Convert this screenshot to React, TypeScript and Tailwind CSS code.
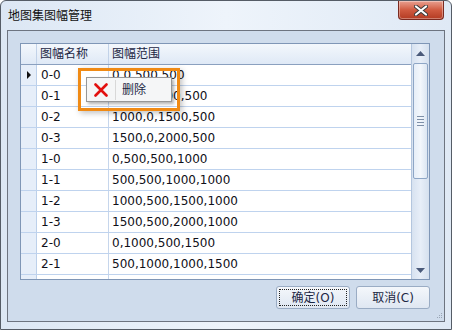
import React from "react";

const rows = [
  ["0-0", "0,0,500,500"],
  ["0-1", "500,0,1000,500"],
  ["0-2", "1000,0,1500,500"],
  ["0-3", "1500,0,2000,500"],
  ["1-0", "0,500,500,1000"],
  ["1-1", "500,500,1000,1000"],
  ["1-2", "1000,500,1500,1000"],
  ["1-3", "1500,500,2000,1000"],
  ["2-0", "0,1000,500,1500"],
  ["2-1", "500,1000,1000,1500"],
  ["2-2", "1000,1000,1500,1500"],
];

const font = { fontFamily: '"DejaVu Sans", "Noto Sans CJK SC", sans-serif' };

function CloseButton() {
  return (
    <div className="w-[46px] h-[19px] rounded-b-[4px] border border-t-0 border-[#7a2a20] bg-gradient-to-b from-[#e8a090] via-[#d05a40] to-[#b33a22] flex items-center justify-center shadow-[inset_0_0_0_1px_rgba(255,255,255,0.35)]">
      <svg width="14" height="11" viewBox="0 0 14 11">
        <path d="M2 1.5 L12 9.5 M12 1.5 L2 9.5" stroke="#3a3a3a" strokeWidth="4" strokeLinecap="round" />
        <path d="M2 1.5 L12 9.5 M12 1.5 L2 9.5" stroke="#ffffff" strokeWidth="2.2" strokeLinecap="round" />
      </svg>
    </div>
  );
}

function Scrollbar() {
  return (
    <div className="w-[18px] h-full flex flex-col items-center bg-gradient-to-r from-[#d7e2f0] via-[#e7eef8] to-[#d5e0ee] border-l border-[#b4c6de]">
      <div className="h-[19px] w-full flex items-center justify-center">
        <svg width="9" height="5" viewBox="0 0 9 5"><path d="M0 5 L4.5 0 L9 5 Z" fill="#4a5a7a" /></svg>
      </div>
      <div className="w-[15px] h-[116px] rounded-[2px] border border-[#8ea6c6] bg-gradient-to-r from-[#e6eef8] via-[#f3f7fc] to-[#dce6f2] flex flex-col items-center justify-center gap-[2px]">
        {[0, 1, 2, 3].map((i) => (
          <div key={i} className="w-[7px] h-px bg-[#7d8fa8]" />
        ))}
      </div>
      <div className="flex-1" />
      <div className="h-[17px] w-full flex items-center justify-center">
        <svg width="9" height="5" viewBox="0 0 9 5"><path d="M0 0 L4.5 5 L9 0 Z" fill="#4a5a7a" /></svg>
      </div>
    </div>
  );
}

function Grid() {
  return (
    <div className="w-[410px] h-[237px] border border-[#7f96b6] bg-white flex overflow-hidden">
      <div className="flex-1 flex flex-col overflow-hidden">
        <div className="h-[21px] shrink-0 flex bg-gradient-to-b from-[#f3f7fc] to-[#dfe9f6] border-b border-[#8aa0bf] text-[#1c2744] text-[12px]">
          <div className="w-[16px] shrink-0 border-r border-[#c2d2e8]" />
          <div className="w-[72px] shrink-0 border-r border-[#c2d2e8] pl-[3px] flex items-center">图幅名称</div>
          <div className="flex-1 pl-[3px] flex items-center">图幅范围</div>
        </div>
        {rows.map(([name, range], i) => (
          <div key={name} className="h-[21px] shrink-0 flex border-b border-[#bfd3ee] text-[12px] text-[#101018]">
            <div className="w-[16px] shrink-0 bg-[#e6eef9] border-r border-[#bcd0ea] flex items-center justify-center">
              {i === 0 && (
                <svg width="4" height="8" viewBox="0 0 4 8"><path d="M0 0 L4 4 L0 8 Z" fill="#111" /></svg>
              )}
            </div>
            <div className="w-[72px] shrink-0 border-r border-[#c6d6ec] pl-[4px] flex items-center">{name}</div>
            <div className="flex-1 pl-[3px] flex items-center whitespace-nowrap">{range}</div>
          </div>
        ))}
      </div>
      <Scrollbar />
    </div>
  );
}

function Button({ label, focused }: { label: string; focused?: boolean }) {
  return (
    <div className="w-[74px] h-[23px] rounded-[3px] border border-[#9aacc4] bg-gradient-to-b from-[#f4f7fb] to-[#dfe7f2] p-[2px]">
      <div className={`w-full h-full flex items-center justify-center text-[12px] text-[#1c2744] ${focused ? "border border-dotted border-[#222]" : ""}`}>
        {label}
      </div>
    </div>
  );
}

export default function App() {
  return (
    <div style={font} className="w-[452px] h-[330px] relative bg-gradient-to-r from-[#dce7f4] via-[#eef4fb] to-[#dfe9f5] border border-[#555c66] rounded-t-[6px] flex flex-col overflow-hidden">
      <div className="h-[29px] shrink-0 flex items-start justify-between pl-[7px] pr-[7px]">
        <div className="pt-[6px] text-[12px] text-[#111]">地图集图幅管理</div>
        <CloseButton />
      </div>
      <div className="mx-[6px] h-[292px] border border-[#6d7480] bg-[#cfdcec] pt-[12px] pl-[12px] flex flex-col">
        <Grid />
        <div className="w-[410px] flex justify-end gap-[6px] mt-[6px]">
          <Button label="确定(O)" focused />
          <Button label="取消(C)" />
        </div>
        <div className="flex-1" />
      </div>

      <div className="absolute left-[77px] top-[67px] w-[102px] h-[43px] border-[3px] border-[#f08a14] shadow-[2px_2px_6px_rgba(0,0,0,0.25)] flex items-center justify-center">
        <div className="w-[86px] h-[25px] bg-[#f5f6f7] border border-[#979797] shadow-[2px_2px_3px_rgba(0,0,0,0.3)] flex items-center">
          <div className="w-[28px] h-full flex items-center justify-center">
            <svg width="14" height="14" viewBox="0 0 14 14">
              <path d="M1.5 1.5 L12.5 12.5 M12.5 1.5 L1.5 12.5" stroke="#e3100f" strokeWidth="2.6" strokeLinecap="round" />
            </svg>
          </div>
          <div className="w-px h-[20px] bg-[#d8d8d8] mr-[6px]" />
          <div className="text-[12px] text-[#1c2744]">删除</div>
        </div>
      </div>

      <div className="absolute right-[8px] bottom-[10px]">
        <svg width="6" height="6" viewBox="0 0 6 6">
          <rect x="4" y="0" width="1" height="1" fill="#9aa6b6" />
          <rect x="2" y="2" width="1" height="1" fill="#9aa6b6" />
          <rect x="4" y="2" width="1" height="1" fill="#9aa6b6" />
          <rect x="0" y="4" width="1" height="1" fill="#9aa6b6" />
          <rect x="2" y="4" width="1" height="1" fill="#9aa6b6" />
          <rect x="4" y="4" width="1" height="1" fill="#9aa6b6" />
        </svg>
      </div>
    </div>
  );
}
